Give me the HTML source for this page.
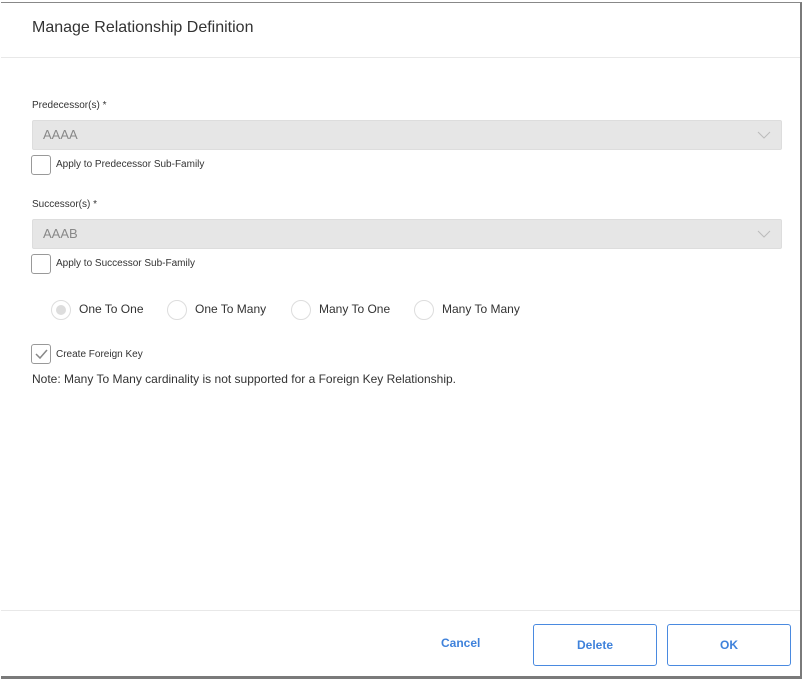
<!DOCTYPE html><html><head><style>
body{margin:0;width:803px;height:679px;background:#fff;position:relative;overflow:hidden;font-family:"Liberation Sans",sans-serif;}
.bg{position:absolute;left:0;top:0;width:803px;height:679px;background:#fff}
.dlg{position:absolute;left:1px;top:2px;width:799px;height:673px;background:#fff;border-right:2px solid #7a7a7a;border-bottom:3px solid #7a7a7a;border-top:1px solid #888}
.t{position:absolute;font-size:16px;color:#333;left:31px;top:16px}
.hr{position:absolute;left:0;right:0;height:1px;background:#e8e8e8}
.lbl{position:absolute;left:31px;font-size:10px;color:#333}
.sel{position:absolute;left:31px;width:748px;height:28px;background:#e6e6e6;border:1px solid #ddd;border-radius:2px;color:#888;font-size:13px;line-height:28px;text-indent:10px}
.sel svg{position:absolute;right:10px;top:10px}
.cb{position:absolute;left:30px;width:18px;height:18px;border:1px solid #999;border-radius:3px;background:#fff}
.cbl{position:absolute;left:55px;font-size:10px;color:#333}
.r{position:absolute;top:297px;width:18px;height:18px;border:1px solid #ddd;border-radius:50%}
.rl{position:absolute;top:299px;font-size:12px;color:#333}
.btn{position:absolute;top:621px;width:122px;height:40px;border:1px solid #4a8ae0;border-radius:3px;color:#3f82db;font-weight:bold;font-size:12px;text-align:center;line-height:40px}
</style></head><body><div class="bg"></div>
<div class="dlg">
<div class="t">Manage Relationship Definition</div>
<div class="hr" style="top:54px"></div>
<div class="lbl" style="top:97px">Predecessor(s) *</div>
<div class="sel" style="top:117px">AAAA<svg width="14" height="8"><path d="M1 1l6 6 6-6" stroke="#bbb" fill="none"/></svg></div>
<div class="cb" style="top:152px"></div><div class="cbl" style="top:156px">Apply to Predecessor Sub-Family</div>
<div class="lbl" style="top:196px">Successor(s) *</div>
<div class="sel" style="top:216px">AAAB<svg width="14" height="8"><path d="M1 1l6 6 6-6" stroke="#bbb" fill="none"/></svg></div>
<div class="cb" style="top:251px"></div><div class="cbl" style="top:255px">Apply to Successor Sub-Family</div>
<div class="r" style="left:50px"><div style="width:10px;height:10px;border-radius:50%;background:#ddd;margin:4px"></div></div><div class="rl" style="left:78px">One To One</div>
<div class="r" style="left:166px"></div><div class="rl" style="left:194px">One To Many</div>
<div class="r" style="left:290px"></div><div class="rl" style="left:318px">Many To One</div>
<div class="r" style="left:413px"></div><div class="rl" style="left:441px">Many To Many</div>
<div class="cb" style="top:341px"><svg width="18" height="18"><path d="M4 9l4 4 7-8" stroke="#888" stroke-width="1.5" fill="none"/></svg></div><div class="cbl" style="top:346px">Create Foreign Key</div>
<div style="position:absolute;left:31px;top:369px;font-size:12px;color:#333">Note: Many To Many cardinality is not supported for a Foreign Key Relationship.</div>
<div class="hr" style="top:607px"></div>
<div style="position:absolute;left:440px;top:633px;color:#3f82db;font-weight:bold;font-size:12px">Cancel</div>
<div class="btn" style="left:532px">Delete</div>
<div class="btn" style="left:666px">OK</div>
</div></body></html>
